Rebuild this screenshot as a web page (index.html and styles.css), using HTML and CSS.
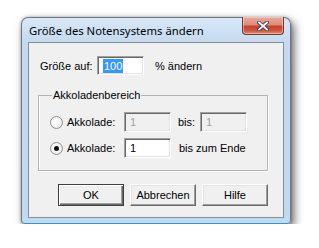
FILE: index.html
```html
<!DOCTYPE html>
<html>
<head>
<meta charset="utf-8">
<link rel="stylesheet" href="styles.css">
</head>
<body>
<div class="window">
  <div class="titlebar">
    <span class="title">Größe des Notensystems ändern</span>
    <div class="close">
      <svg width="12" height="10" viewBox="0 0 12 10">
        <path d="M2 1.5 L10 8.5 M10 1.5 L2 8.5" stroke="#3b3f4a" stroke-width="3.6" stroke-linecap="square" fill="none"/>
        <path d="M2 1.5 L10 8.5 M10 1.5 L2 8.5" stroke="#ffffff" stroke-width="1.8" stroke-linecap="square" fill="none"/>
      </svg>
    </div>
  </div>
  <div class="client">
    <div class="row size-row">
      <span class="lbl lbl-size">Größe auf:</span>
      <div class="field"><span class="sel">100</span></div>
      <span class="pct">% ändern</span>
    </div>
    <fieldset class="group">
      <legend>Akkoladenbereich</legend>
      <div class="row">
        <span class="radio"></span>
        <span class="lbl lbl-akk">Akkolade:</span>
        <div class="field disabled">1</div>
        <span class="lbl lbl-bis">bis:</span>
        <div class="field disabled">1</div>
      </div>
      <div class="row row2">
        <span class="radio checked"></span>
        <span class="lbl lbl-akk">Akkolade:</span>
        <div class="field">1</div>
        <span class="lbl lbl-end">bis zum Ende</span>
      </div>
    </fieldset>
    <div class="buttons">
      <div class="btn default">OK</div>
      <div class="btn">Abbrechen</div>
      <div class="btn">Hilfe</div>
    </div>
  </div>
</div>
</body>
</html>
```

FILE: styles.css
```css
* { box-sizing: border-box; }
html, body { margin: 0; background: #ffffff; }
body {
  padding: 17px 0 0 21px;
  font-family: "Liberation Sans", Arial, sans-serif;
  font-size: 11px;
  color: #000;
}
.window {
  width: 270px;
  height: 207px;
  border: 1px solid #6b7783;
  border-bottom-color: #2c95d4;
  border-radius: 7px 7px 4px 4px;
  padding: 0 6px 5px 6px;
  background: linear-gradient(180deg, #d9e8f7 0px, #c5daf0 24px, #c3d9f0 100%);
  box-shadow: 3px 4px 10px rgba(0,0,0,0.6), 0 0 3px rgba(0,0,0,0.25);
}
.titlebar {
  height: 24px;
  display: flex;
  justify-content: space-between;
  align-items: flex-start;
}
.title {
  font-family: "Noto Sans", "Open Sans", sans-serif;
  font-size: 11.3px;
  line-height: 16px;
  margin: 5px 0 0 1px;
  color: #000;
}
.close {
  width: 42px;
  height: 18px;
  margin-top: -1px;
  border: 1px solid #6e3a31;
  border-top: none;
  border-radius: 0 0 4px 4px;
  background: linear-gradient(180deg, #e9a99c 0%, #dc8d7c 45%, #c5412a 55%, #d0573f 80%, #e08b6f 100%);
  box-shadow: inset 0 0 0 1px rgba(255,220,210,0.5);
  display: flex;
  justify-content: center;
  align-items: center;
}
.close svg { display: block; margin-top: 1px; }
.client {
  height: 176px;
  border: 1px solid #838e99;
  background: #f0f0f0;
  padding: 13px 0 0 9px;
}
.row {
  display: flex;
  align-items: center;
  height: 20px;
}
.size-row { margin-left: 2px; height: 19px; }
.lbl { white-space: nowrap; }
.lbl-size { width: 57px; }
.pct { margin-left: 11px; }
.field {
  width: 47px;
  height: 100%;
  border: 1px solid;
  border-color: #a0a0a0 #ffffff #ffffff #a0a0a0;
  box-shadow: inset 1px 1px 0 #696969, inset -1px -1px 0 #e3e3e3;
  background: #ffffff;
  padding: 0 0 0 5px;
  display: flex;
  align-items: center;
  line-height: 13px;
}
.field.disabled { background: #f0f0f0; color: #a0a0a0; }
.sel {
  background: #3399ff;
  color: #ffffff;
  padding: 1px 1px 0 1px;
}
.group {
  width: 230px;
  margin: 13px 0 0 0;
  padding: 0 0 12px 11px;
  border: 1px solid #b4b4b4;
  box-shadow: inset 1px 0 0 #fff, 1px 1px 0 #fff;
  min-width: 0;
}
.group legend {
  padding: 0 1px;
  margin-left: 2px;
  line-height: 14px;
}
.group .row { margin-top: 10px; }
.group .row2 { margin-top: 6px; }
.radio {
  width: 13px;
  height: 13px;
  border-radius: 50%;
  border: 1px solid #8f8f8f;
  background: radial-gradient(circle at 40% 40%, #ffffff 0%, #f4f4f4 50%, #dcdcdc 100%);
  flex: none;
  display: flex;
  align-items: center;
  justify-content: center;
}
.radio.checked::after {
  content: "";
  width: 5px;
  height: 5px;
  border-radius: 50%;
  background: #111;
}
.lbl-akk { margin-left: 4px; width: 57px; }
.lbl-bis { margin-left: 7px; width: 22px; }
.lbl-end { margin-left: 8px; }
.buttons {
  display: flex;
  gap: 6px;
  margin-top: 13px;
  padding-left: 20px;
}
.btn {
  width: 66px;
  height: 22px;
  border: 1px solid;
  border-color: #ffffff #696969 #696969 #ffffff;
  box-shadow: inset -1px -1px 0 #a0a0a0, inset 1px 1px 0 #e3e3e3;
  background: #f0f0f0;
  display: flex;
  align-items: center;
  justify-content: center;
}
.btn.default {
  border: 1px solid #404040;
  box-shadow: inset 1px 1px 0 #ffffff, inset -1px -1px 0 #696969, inset -2px -2px 0 #a0a0a0;
}
```
